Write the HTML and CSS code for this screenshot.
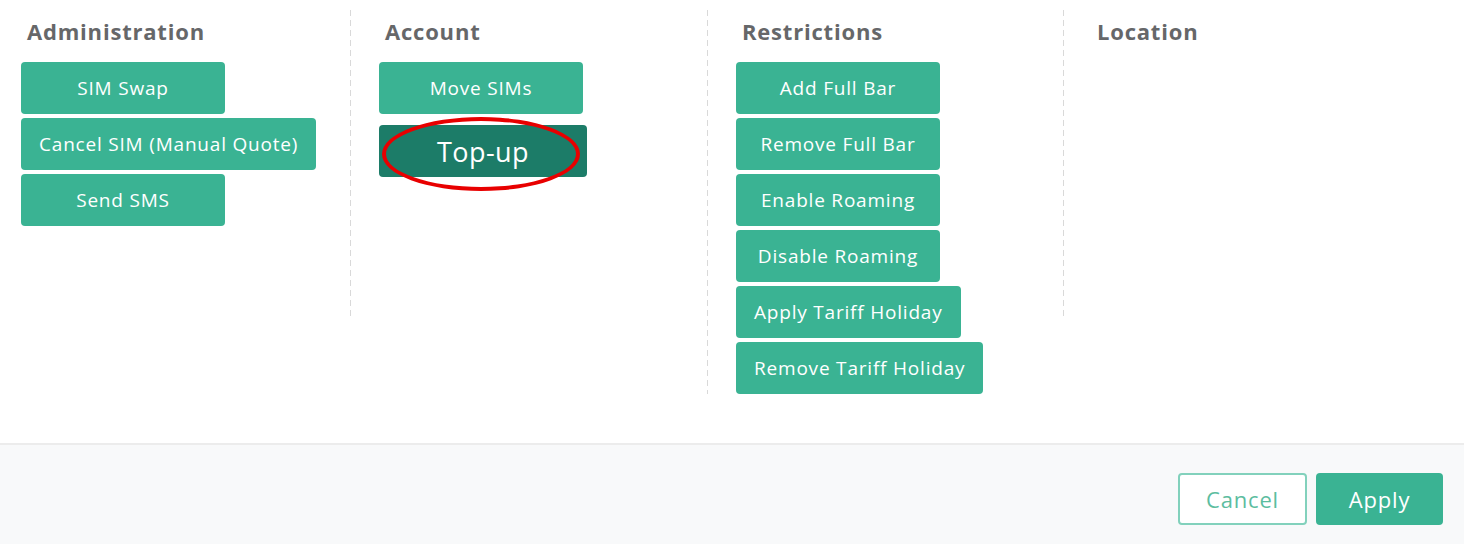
FILE: index.html
```html
<!DOCTYPE html>
<html lang="en">
<head>
<meta charset="utf-8">
<title>SIM Actions</title>
<link rel="stylesheet" href="styles.css">
</head>
<body>
<div class="modal">
  <main class="groups">
    <section class="group group-first">
      <h3 class="group-title">Administration</h3>
      <div class="actions">
        <button class="btn">SIM Swap</button>
        <button class="btn">Cancel SIM (Manual Quote)</button>
        <button class="btn">Send SMS</button>
      </div>
    </section>
    <section class="group">
      <h3 class="group-title">Account</h3>
      <div class="actions">
        <button class="btn">Move SIMs</button>
        <div class="highlight">
          <button class="btn btn-active">Top-up</button>
          <span class="annotation"></span>
        </div>
      </div>
    </section>
    <section class="group">
      <h3 class="group-title">Restrictions</h3>
      <div class="actions">
        <button class="btn">Add Full Bar</button>
        <button class="btn">Remove Full Bar</button>
        <button class="btn">Enable Roaming</button>
        <button class="btn">Disable Roaming</button>
        <button class="btn">Apply Tariff Holiday</button>
        <button class="btn">Remove Tariff Holiday</button>
      </div>
    </section>
    <section class="group group-last">
      <h3 class="group-title">Location</h3>
      <div class="actions"></div>
    </section>
  </main>
  <footer class="footer">
    <button class="btn-outline">Cancel</button>
    <button class="btn-primary">Apply</button>
  </footer>
</div>
</body>
</html>
```

FILE: styles.css
```css
* { box-sizing: border-box; }

html, body {
  margin: 0;
  padding: 0;
  background: #ffffff;
  font-family: "Open Sans", "Noto Sans", sans-serif;
}

.modal {
  width: 1464px;
  height: 544px;
  display: flex;
  flex-direction: column;
}

.groups {
  height: 443px;
  padding-top: 10px;
  display: grid;
  grid-template-columns: 350px 357px 356px 1fr;
  align-items: start;
}

.group {
  min-height: 306px;
  padding-left: 29px;
  background-image: linear-gradient(#d9d9d9 60%, transparent 60%);
  background-size: 1px 10px;
  background-repeat: repeat-y;
  background-position: 0 0;
}

.group-first {
  padding-left: 21px;
  background-image: none;
}

.group-last {
  padding-left: 28px;
}

.group-title {
  margin: 0 0 16px 6px;
  padding-top: 7px;
  line-height: 29px;
  font-size: 22px;
  font-weight: 700;
  letter-spacing: 0.8px;
  color: #666769;
}

.actions {
  display: flex;
  flex-direction: column;
  align-items: flex-start;
  gap: 4px;
}

.btn {
  height: 52px;
  min-width: 204px;
  padding: 0 18px;
  border: none;
  border-radius: 4px;
  background: #3ab393;
  color: #ffffff;
  font-family: "Open Sans", "Noto Sans", sans-serif;
  font-size: 19px;
  letter-spacing: 0.8px;
  white-space: nowrap;
}

.highlight {
  position: relative;
  margin-top: 7px;
}

.btn-active {
  min-width: 208px;
  background: #1c7c68;
  font-size: 27px;
  letter-spacing: 0.4px;
}

.annotation {
  position: absolute;
  left: 3px;
  top: -8px;
  width: 198px;
  height: 74px;
  border: 4px solid #e80000;
  border-radius: 50%;
  pointer-events: none;
}

.footer {
  flex: 1;
  background: #f8f9fa;
  border-top: 2px solid #ececec;
  display: flex;
  justify-content: flex-end;
  align-items: flex-start;
  gap: 9px;
  padding: 28px 21px 0 0;
}

.btn-outline,
.btn-primary {
  height: 52px;
  border-radius: 4px;
  font-family: "Open Sans", "Noto Sans", sans-serif;
  font-size: 22px;
  letter-spacing: 0.8px;
}

.btn-outline {
  width: 129px;
  background: #ffffff;
  border: 2px solid #82d1bc;
  color: #5cbd9f;
}

.btn-primary {
  width: 127px;
  background: #3ab393;
  border: none;
  color: #ffffff;
}
```
